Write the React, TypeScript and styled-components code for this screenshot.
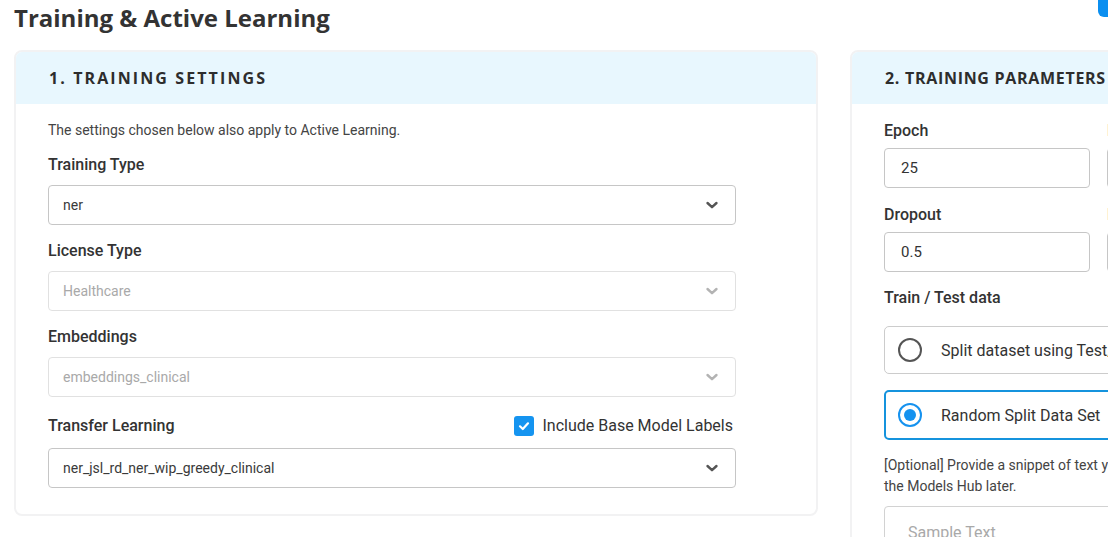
import * as React from "react";
import styled, { createGlobalStyle } from "styled-components";

const GlobalStyle = createGlobalStyle`
  html, body {
    margin: 0;
    padding: 0;
    background: #ffffff;
    overflow: hidden;
  }
  body {
    font-family: Roboto, "Liberation Sans", sans-serif;
    color: #333333;
  }
`;

const Page = styled.div`
  width: 1108px;
  height: 537px;
  overflow: hidden;
  padding-left: 14px;
  box-sizing: border-box;
`;

const TitleRow = styled.div`
  display: flex;
  align-items: flex-start;
  justify-content: space-between;
  height: 36px;
`;

const Title = styled.h1`
  margin: 0;
  font-family: "Open Sans", "Liberation Sans", sans-serif;
  font-weight: 700;
  font-size: 24px;
  line-height: 36px;
  color: #333333;
`;

const TopButton = styled.div`
  flex-shrink: 0;
  width: 120px;
  height: 40px;
  margin-top: -23px;
  margin-right: -110px;
  background: #0b8ff0;
  border-radius: 6px;
`;

const Panels = styled.div`
  display: flex;
  gap: 32px;
  margin-top: 14px;
  align-items: flex-start;
`;

const Panel = styled.section`
  flex-shrink: 0;
  width: 804px;
  border: 2px solid #f2f2f3;
  border-radius: 8px;
  box-sizing: border-box;
  overflow: hidden;
  background: #ffffff;
`;

const PanelHeader = styled.div<{ $spaced?: boolean }>`
  height: 52px;
  display: flex;
  align-items: center;
  padding-left: 33px;
  padding-bottom: 1px;
  box-sizing: border-box;
  background: #e8f7fe;
  font-family: "Open Sans", "Liberation Sans", sans-serif;
  font-weight: 700;
  font-size: 16px;
  letter-spacing: ${(p) => (p.$spaced ? "2.1px" : "0.7px")};
  text-transform: uppercase;
  color: #2d2d2d;
`;

const PanelBody = styled.div`
  padding: 17px 32px 26px;
`;

const Form = styled.div`
  width: 688px;
  display: flex;
  flex-direction: column;
  gap: 16px;
`;

const Intro = styled.p`
  margin: 0;
  font-size: 14px;
  line-height: 18px;
  color: #444444;
`;

const Field = styled.div`
  display: flex;
  flex-direction: column;
`;

const LabelRow = styled.div<{ $tight?: boolean }>`
  display: flex;
  align-items: center;
  justify-content: space-between;
  min-height: 20px;
  margin-bottom: ${(p) => (p.$tight ? "7px" : "10px")};
`;

const Label = styled.label`
  font-size: 16px;
  line-height: 20px;
  font-weight: 500;
  color: #333333;
`;

const Tall = styled(LabelRow)`
  height: 25px;
`;

const SelectBox = styled.div<{ $disabled?: boolean }>`
  height: 40px;
  box-sizing: border-box;
  display: flex;
  align-items: center;
  justify-content: space-between;
  padding: 0 16px 0 14px;
  border: 1px solid ${(p) => (p.$disabled ? "#e1e1e1" : "#c6c6c6")};
  border-radius: 4px;
  font-size: 14px;
  color: ${(p) => (p.$disabled ? "#a9a9a9" : "#3a3a3a")};
  background: #ffffff;
`;

const Chevron = ({ color }: { color: string }) => (
  <svg width="14" height="14" viewBox="0 0 14 14">
    <path
      d="M2.5 5 L7 9.2 L11.5 5"
      fill="none"
      stroke={color}
      strokeWidth="2.4"
      strokeLinecap="round"
      strokeLinejoin="round"
    />
  </svg>
);

const CheckLabel = styled.label`
  display: flex;
  align-items: center;
  gap: 8px;
  font-size: 16px;
  color: #333333;
  margin-right: 3px;
`;

const CheckBox = styled.span`
  width: 20px;
  height: 20px;
  border-radius: 3px;
  background: #1594f0;
  display: flex;
  align-items: center;
  justify-content: center;
`;

const ParamGrid = styled.div`
  display: grid;
  grid-template-columns: repeat(3, 206px);
  column-gap: 17px;
  row-gap: 17px;
`;

const Input = styled.div`
  height: 40px;
  box-sizing: border-box;
  display: flex;
  align-items: center;
  padding: 0 16px;
  border: 1px solid #c6c6c6;
  border-radius: 4px;
  font-size: 15px;
  color: #333333;
`;

const Section = styled.div`
  margin-top: 16px;
`;

const Options = styled.div`
  margin-top: 18px;
  display: flex;
  flex-direction: column;
  gap: 16px;
  width: 740px;
`;

const RadioCard = styled.div<{ $selected?: boolean }>`
  height: ${(p) => (p.$selected ? "50px" : "48px")};
  box-sizing: border-box;
  display: flex;
  align-items: center;
  gap: 19px;
  padding-left: ${(p) => (p.$selected ? "12px" : "13px")};
  border: ${(p) => (p.$selected ? "2px solid #1593dd" : "1px solid #cccccc")};
  border-radius: 5px;
  font-size: 16px;
  color: #333333;
`;

const RadioDot = styled.span<{ $selected?: boolean }>`
  width: 24px;
  height: 24px;
  box-sizing: border-box;
  border-radius: 50%;
  border: 2px solid ${(p) => (p.$selected ? "#1592ef" : "#555555")};
  display: flex;
  align-items: center;
  justify-content: center;

  &::after {
    content: "";
    display: ${(p) => (p.$selected ? "block" : "none")};
    width: 12px;
    height: 12px;
    border-radius: 50%;
    background: #1592ef;
  }
`;

const Hint = styled.p`
  margin: 15px 0 0;
  font-size: 14px;
  line-height: 21px;
  color: #444444;
`;

const TextArea = styled.div`
  margin-top: 9px;
  width: 740px;
  height: 90px;
  box-sizing: border-box;
  padding: 16px 23px;
  border: 1px solid #d2d2d2;
  border-radius: 4px;
  font-size: 16px;
  color: #a9a9a9;
`;

export default function App() {
  return (
    <>
      <GlobalStyle />
      <Page>
        <TitleRow>
          <Title>Training &amp; Active Learning</Title>
          <TopButton />
        </TitleRow>

        <Panels>
          <Panel>
            <PanelHeader $spaced>1. Training Settings</PanelHeader>
            <PanelBody>
              <Form>
                <Intro>The settings chosen below also apply to Active Learning.</Intro>
                <Field>
                  <LabelRow>
                    <Label>Training Type</Label>
                  </LabelRow>
                  <SelectBox>
                    ner
                    <Chevron color="#555555" />
                  </SelectBox>
                </Field>
                <Field>
                  <LabelRow>
                    <Label>License Type</Label>
                  </LabelRow>
                  <SelectBox $disabled>
                    Healthcare
                    <Chevron color="#b3b3b3" />
                  </SelectBox>
                </Field>
                <Field>
                  <LabelRow>
                    <Label>Embeddings</Label>
                  </LabelRow>
                  <SelectBox $disabled>
                    embeddings_clinical
                    <Chevron color="#b3b3b3" />
                  </SelectBox>
                </Field>
                <Field>
                  <Tall>
                    <Label>Transfer Learning</Label>
                    <CheckLabel>
                      <CheckBox>
                        <svg width="14" height="14" viewBox="0 0 14 14">
                          <path
                            d="M3 7.3 L5.8 10 L11 4.3"
                            fill="none"
                            stroke="#ffffff"
                            strokeWidth="2.2"
                            strokeLinecap="round"
                            strokeLinejoin="round"
                          />
                        </svg>
                      </CheckBox>
                      Include Base Model Labels
                    </CheckLabel>
                  </Tall>
                  <SelectBox>
                    ner_jsl_rd_ner_wip_greedy_clinical
                    <Chevron color="#555555" />
                  </SelectBox>
                </Field>
              </Form>
            </PanelBody>
          </Panel>

          <Panel>
            <PanelHeader>2. Training Parameters</PanelHeader>
            <PanelBody>
              <ParamGrid>
                <Field>
                  <LabelRow $tight>
                    <Label>Epoch</Label>
                  </LabelRow>
                  <Input>25</Input>
                </Field>
                <Field>
                  <LabelRow $tight>
                    <Label>Learning Rate</Label>
                  </LabelRow>
                  <Input>0.001</Input>
                </Field>
                <Field>
                  <LabelRow $tight>
                    <Label>Learning Rate Decay</Label>
                  </LabelRow>
                  <Input>0.005</Input>
                </Field>
                <Field>
                  <LabelRow $tight>
                    <Label>Dropout</Label>
                  </LabelRow>
                  <Input>0.5</Input>
                </Field>
                <Field>
                  <LabelRow $tight>
                    <Label>Batch</Label>
                  </LabelRow>
                  <Input>8</Input>
                </Field>
              </ParamGrid>
              <Section>
                <Label>Train / Test data</Label>
                <Options>
                  <RadioCard>
                    <RadioDot />
                    Split dataset using Test/Train tags
                  </RadioCard>
                  <RadioCard $selected>
                    <RadioDot $selected />
                    Random Split Data Set
                  </RadioCard>
                </Options>
                <Hint>
                  [Optional] Provide a snippet of text you want to use as a sample for the model in
                  <br />
                  the Models Hub later.
                </Hint>
                <TextArea>Sample Text</TextArea>
              </Section>
            </PanelBody>
          </Panel>
        </Panels>
      </Page>
    </>
  );
}
